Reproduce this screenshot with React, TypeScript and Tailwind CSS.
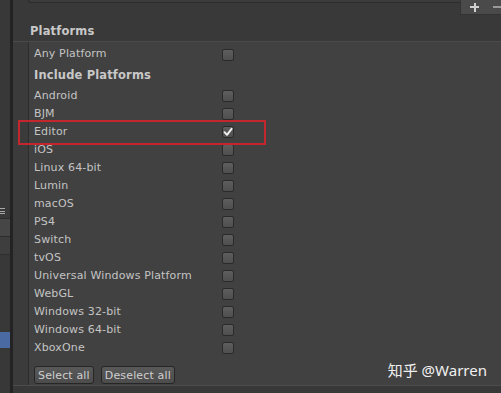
import React from "react";

const platforms = [
  "Android",
  "BJM",
  "Editor",
  "iOS",
  "Linux 64-bit",
  "Lumin",
  "macOS",
  "PS4",
  "Switch",
  "tvOS",
  "Universal Windows Platform",
  "WebGL",
  "Windows 32-bit",
  "Windows 64-bit",
  "XboxOne",
];

const Check: React.FC<{ on?: boolean }> = ({ on }) => (
  <span className="w-[12px] h-[12px] rounded-[2px] border border-[#2a2a2a] bg-gradient-to-b from-[#5e5e5e] to-[#4f4f4f] flex items-center justify-center">
    {on && (
      <svg width="10" height="10" viewBox="0 0 10 10">
        <path d="M1.5 5.2 L4 7.8 L8.6 1.8" stroke="#f2f2f2" strokeWidth="1.9" fill="none" strokeLinecap="round" strokeLinejoin="round" />
      </svg>
    )}
  </span>
);

const Row: React.FC<{ label: string; on?: boolean }> = ({ label, on }) => (
  <div className="h-[18px] flex items-center">
    <span className="w-[193px] pl-[5px]">{label}</span>
    <Check on={on} />
  </div>
);

export default function App() {
  return (
    <div className="relative w-[501px] h-[393px] flex overflow-hidden bg-[#3b3b3b] text-[11px] tracking-[0.15px] text-[#c4c4c4] font-['DejaVu_Sans',sans-serif]">
      {/* left dock strip */}
      <div className="w-[10px] flex flex-col bg-[#383838]">
        <div className="h-[208px]" />
        {/* menu icon, cut by the edge */}
        <div className="h-[6px] w-[5px] flex flex-col justify-between">
          <div className="h-px bg-[#a8a8a8]" />
          <div className="h-px bg-[#a8a8a8]" />
          <div className="h-px bg-[#a8a8a8]" />
        </div>
        <div className="h-[19px] mt-[4px] border-y border-[#2b2b2b] bg-[#464646]" />
        <div className="h-[18px] border-b border-[#2f2f2f] bg-[#3e3e3e]" />
        <div className="h-[77px]" />
        <div className="h-[16px] bg-[#4a6aa3]" />
      </div>
      <div className="w-[3px] bg-[#232323]" />

      <div className="flex-1 flex flex-col">
        {/* header */}
        <div className="h-[42px] relative bg-[#393939] border-b border-[#4a4a4a]">
          <div className="absolute left-[15px] right-0 top-0 h-[3px] rounded-bl-[3px] border-b border-l border-[#2c2c2c] bg-[#3c3c3c]" />
          <div className="absolute right-0 top-0 w-[41px] h-[15px] bg-[#4a4a4a] border-l border-b border-[#333] flex items-center">
            {/* plus / minus toolbar icons */}
            <div className="ml-[9px] relative w-[9px] h-[9px]">
              <div className="absolute left-0 top-[3.5px] w-[9px] h-[2px] bg-[#cfcfcf]" />
              <div className="absolute left-[3.5px] top-0 w-[2px] h-[9px] bg-[#cfcfcf]" />
            </div>
            <div className="ml-[15px] w-[8px] h-[2px] bg-[#9a9a9a]" />
          </div>
          <div className="absolute left-[17px] top-[23px] font-bold text-[11.5px] text-[#c8c8c8]">Platforms</div>
        </div>

        {/* box */}
        <div className="flex-1 flex">
          <div className="w-[15px]" />
          <div className="flex-1 flex flex-col bg-[#414141] border-l border-[#2d2d2d] relative">
            <div className="h-[19px] mt-[3px] flex items-center">
              <span className="w-[193px] pl-[5px]">Any Platform</span>
              <Check />
            </div>
            <div className="h-[23px] flex items-center pl-[5px] font-bold text-[11.5px] text-[#c8c8c8]">
              Include Platforms
            </div>
            {platforms.map((p) => (
              <Row key={p} label={p} on={p === "Editor"} />
            ))}
            <div className="flex gap-[7px] ml-[5px] mt-[9px]">
              <button className="h-[18px] px-[3px] rounded-[3px] border border-[#262626] bg-gradient-to-b from-[#595959] to-[#4c4c4c] text-[#cfcfcf] leading-none">
                Select all
              </button>
              <button className="h-[18px] px-[3px] rounded-[3px] border border-[#262626] bg-gradient-to-b from-[#595959] to-[#4c4c4c] text-[#cfcfcf] leading-none">
                Deselect all
              </button>
            </div>
            <div className="absolute right-[14px] bottom-[4px] text-[15px] tracking-normal text-[#f0f0f0] font-['Noto_Sans','Noto_Sans_CJK_SC',sans-serif]">
              知乎 @Warren
            </div>
          </div>
        </div>
        <div className="h-[8px] bg-[#383838] border-t border-[#4c4c4c]" />
      </div>

      {/* highlight annotation */}
      <div className="absolute left-[18px] top-[120px] w-[248px] h-[25px] border-2 border-[#c3262d]" />
    </div>
  );
}
